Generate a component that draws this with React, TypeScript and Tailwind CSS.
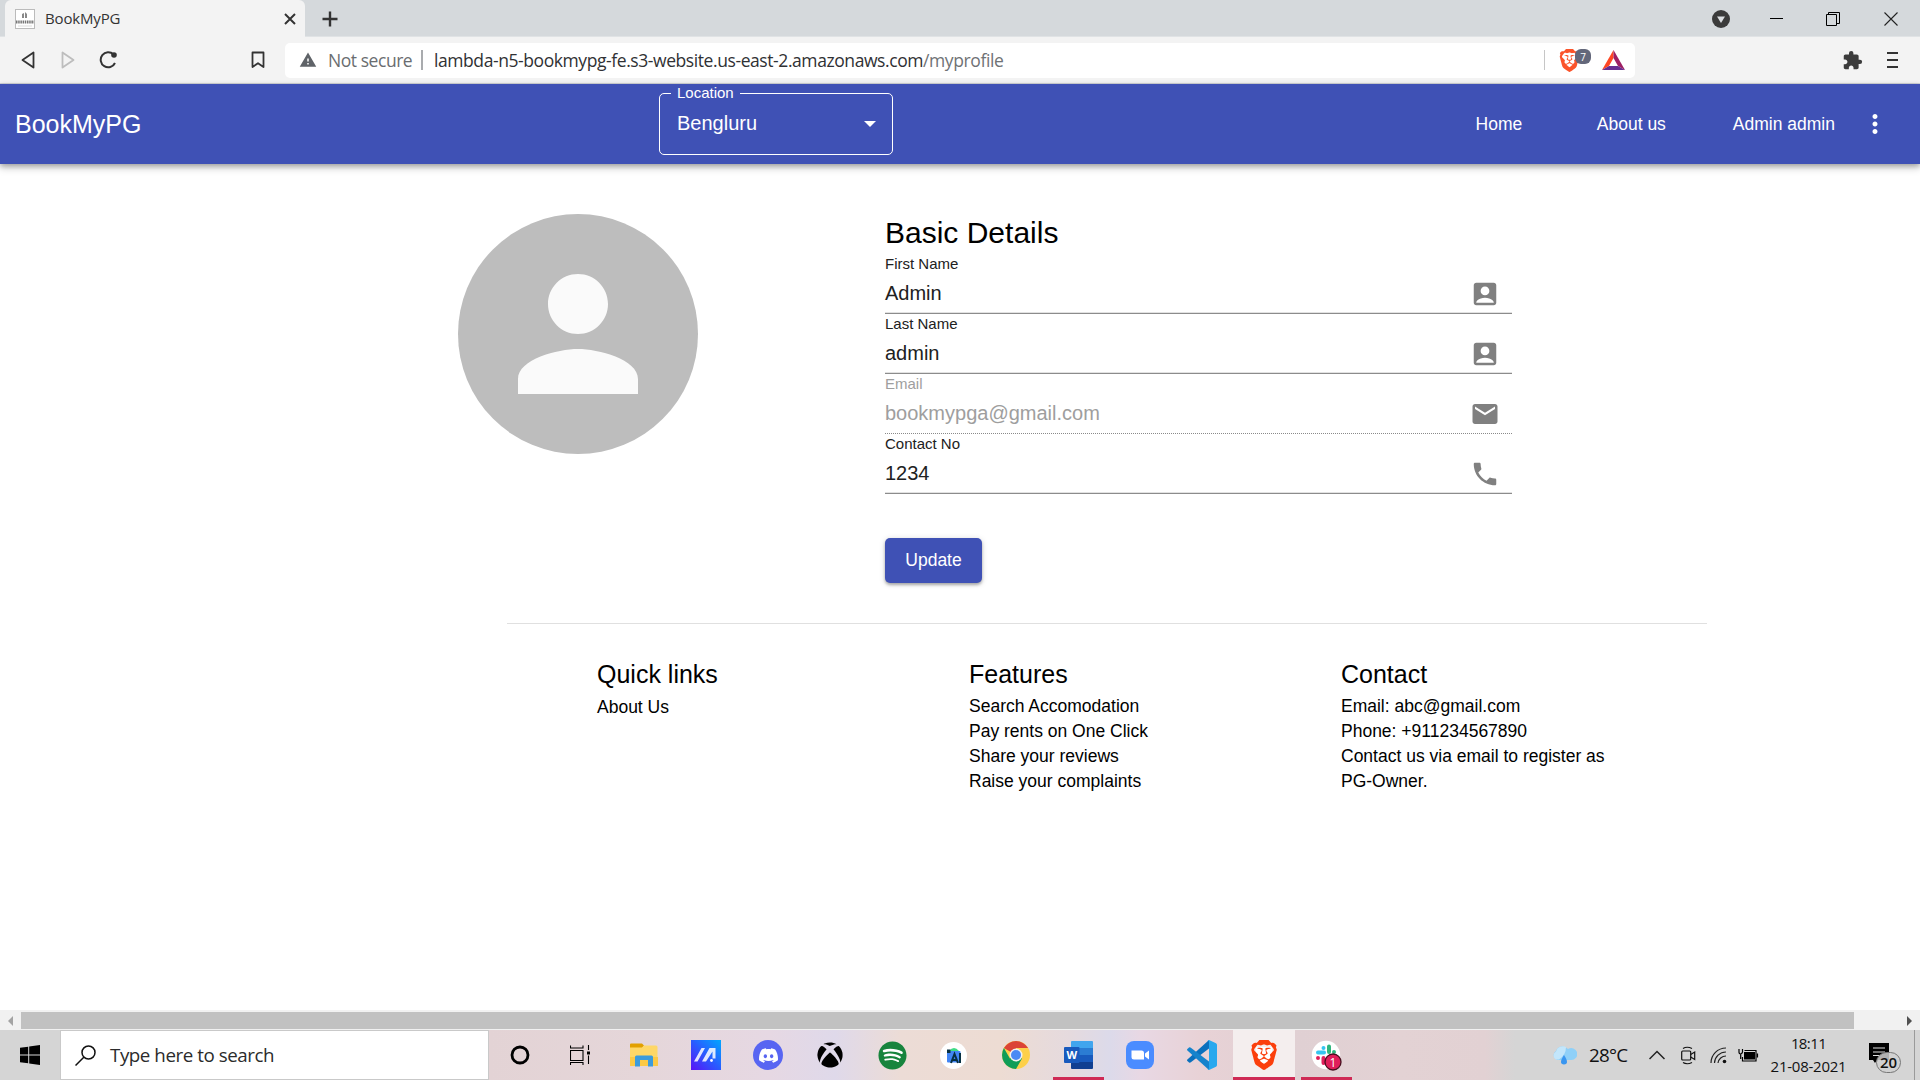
import React from "react";
import { MdAccountBox, MdEmail, MdPhone, MdPerson, MdMoreVert, MdExtension, MdWarning } from "react-icons/md";
import { SiBrave, SiDiscord } from "react-icons/si";
import { FaXbox, FaSpotify } from "react-icons/fa";

function TabStrip() {
  return (
    <div className="flex h-[37px] border-b border-[#e0e3e5] bg-[#d5d9dc] pl-[5px]">
      <div className="flex h-[37px] w-[300px] items-center rounded-t-[6px] bg-[#f3f3f3] pl-[10px] pr-[9px]">
        <svg width="20" height="20" viewBox="0 0 20 20">
          <rect x="0.5" y="0.5" width="19" height="19" fill="#fff" stroke="#bbb" />
          <path d="M7 9V5l2-1v5zM10 9V3l2 2v4z" fill="#888" />
          <path d="M1 13h18" stroke="#777" strokeWidth="3" strokeDasharray="1.5 .7" />
          <path d="M3 17h14" stroke="#ddd" />
        </svg>
        <span className="mb-[2px] ml-[10px] grow font-['Open_Sans'] text-[15px] leading-5 tracking-[-0.15px] text-[#333]">BookMyPG</span>
        <svg width="12" height="12" viewBox="0 0 12 12" stroke="#333" strokeWidth="2"><path d="M1 1l10 10M11 1L1 11" /></svg>
      </div>
      <svg className="ml-[17px] mt-[11px]" width="16" height="16" viewBox="0 0 16 16" stroke="#333" strokeWidth="2.4"><path d="M8 0.5v15M0.5 8h15" /></svg>
      <div className="ml-auto flex h-[37px] items-center">
        <svg width="18" height="18" viewBox="0 0 18 18"><circle cx="9" cy="9" r="9" fill="#3b3b3b" /><path d="M5 6.5h8L9 13z" fill="#dcdfe2" /></svg>
        <svg className="ml-10" width="13" height="13" viewBox="0 0 13 13"><path d="M0 6.5h13" stroke="#000" /></svg>
        <svg className="ml-[43px]" width="14" height="14" viewBox="0 0 14 14" fill="none" stroke="#000"><path d="M.5 2.500h10v11h-10zM2.500 2.500v-2h11v11h-3" /></svg>
        <svg className="ml-[44px] mr-[22px]" width="14" height="14" viewBox="0 0 14 14" stroke="#222" strokeWidth="1.100"><path d="M.5 .5l13 13M13.500 .5l-13 13" /></svg>
      </div>
    </div>
  );
}

function Toolbar() {
  return (
    <div className="flex h-[47px] items-center border-b border-[#d2d4d9] bg-[#f3f3f3]">
      <svg className="ml-[21px]" width="14" height="18" viewBox="0 0 14 18" fill="none" stroke="#333" strokeWidth="1.800" strokeLinejoin="round"><path d="M12.500 1.500v15L1.500 9z" /></svg>
      <svg className="ml-[26px]" width="14" height="18" viewBox="0 0 14 18" fill="none" stroke="#bdbdbd" strokeWidth="1.800" strokeLinejoin="round"><path d="M1.500 1.500v15l11-7.500z" /></svg>
      <svg className="ml-6" width="20" height="18" viewBox="0 0 20 18" fill="none" stroke="#333" strokeWidth="2"><path d="M14.500 3.500A7.500 7.500 0 1 0 16 12" /><circle cx="15" cy="4" r="2.800" fill="#333" stroke="none" /></svg>
      <svg className="ml-[132px]" width="14" height="18" viewBox="0 0 14 18" fill="none" stroke="#333" strokeWidth="1.800" strokeLinejoin="round"><path d="M1.500 1.500h11v14.500L7 12.200 1.500 16z" /></svg>
      <div className="ml-5 flex h-[35px] w-[1350px] items-center rounded-[5px] bg-white font-['Open_Sans'] text-[17.5px] leading-6">
        <MdWarning className="ml-[14px] shrink-0 text-[#5f6368]" size={18} />
        <span className="ml-[11px] w-[93px] whitespace-nowrap tracking-[-0.45px] text-[#6a6d70]">Not secure</span>
        <span className="h-5 w-[2px] bg-[#a9abae]" />
        <span className="ml-[11px] whitespace-nowrap tracking-[-0.42px] text-[#303134]">lambda-n5-bookmypg-fe.s3-website.us-east-2.amazonaws.com</span>
        <span className="tracking-[-0.4px] text-[#6f7275]">/myprofile</span>
        <span className="ml-auto h-5 w-px bg-[#c6c6c6]" />
        <span className="relative ml-[15px] h-6 w-[30px]">
          <svg className="absolute left-0 top-[2px]" width="20" height="23" viewBox="0 0 20 23"><path d="M4 4h12v11l-6 6-6-6z" fill="#fff" /></svg>
          <SiBrave className="absolute left-[-2px] top-px text-[#fb542b]" size={23} />
          <span className="absolute left-[15px] top-px flex h-[15px] w-4 items-center justify-center rounded-[6px] bg-[#63677a] text-[10px] leading-none text-white">7</span>
        </span>
        <svg className="ml-[12px] mr-[10px]" width="23" height="20" viewBox="0 0 23 20"><path d="M11.500 0L0 20l7-4 4.500-8z" fill="#ff4724" /><path d="M11.500 0L23 20l-7-4-4.500-8z" fill="#9e1f63" /><path d="M0 20h23l-7-4H7z" fill="#662d91" /></svg>
      </div>
      <MdExtension className="ml-auto text-[#3b3b3b]" size={21} />
      <svg className="ml-6 mr-[21px]" width="12" height="16" viewBox="0 0 12 16" stroke="#333" strokeWidth="1.800"><path d="M0 1h11M0 8h11M0 15h11" /></svg>
    </div>
  );
}

function AppBar() {
  return (
    <header className="relative flex h-20 items-center bg-[#3f51b5] pl-[14px] text-white shadow-[0_2px_5px_rgba(0,0,0,0.25),0_4px_8px_rgba(0,0,0,0.18)]">
      <span className="w-[645px] pl-px text-[25px] leading-[30px]">BookMyPG</span>
      <fieldset className="mt-[-7px] h-[69px] w-[234px] rounded-[5px] border border-white pl-[11px] pr-4">
        <legend className="h-[15px] px-[6px] text-[15px] leading-[13px]">Location</legend>
        <div className="flex h-11 items-center justify-between pl-[6px]">
          <span className="text-[20px] leading-6">Bengluru</span>
          <svg className="mt-px" width="12" height="6" viewBox="0 0 12 6"><path d="M0 0h12L6 6z" fill="#fff" /></svg>
        </div>
      </fieldset>
      <nav className="ml-auto flex items-center text-[17.5px] leading-6">
        <span>Home</span>
        <span className="ml-[74.5px]">About us</span>
        <span className="ml-[67px]">Admin admin</span>
        <MdMoreVert className="ml-[25px] mr-[30px]" size={30} />
      </nav>
    </header>
  );
}

function Field({ label, value, icon, disabled = false }: { label: string; value: string; icon: React.ReactNode; disabled?: boolean }) {
  return (
    <div className={disabled ? "text-[#9e9e9e]" : "text-[#212121]"}>
      <div className="text-[15px] leading-5">{label}</div>
      <div className="flex h-[38px] items-center justify-between pr-3 text-[20px] leading-6">
        {value}
        <span className="mt-[2px] text-[#808080]">{icon}</span>
      </div>
      {disabled ? (
        <div className="h-[2px] border-b border-dotted border-[#8a8a8a]" />
      ) : (
        <div className="h-[2px] border-b border-[#8c8c8c] bg-[#e2e2e2]" />
      )}
    </div>
  );
}

function FooterColumn({ title, lines, first = false }: { title: string; lines: string[]; first?: boolean }) {
  return (
    <div className="w-[372px] shrink-0">
      <h3 className="text-[25px] leading-[30px]">{title}</h3>
      <ul className={first ? "mt-1.5 text-[17.5px] leading-[25px]" : "mt-[5px] text-[17.5px] leading-[25px]"}>
        {lines.map((l) => (<li key={l} className="w-[280px]">{l}</li>))}
      </ul>
    </div>
  );
}

function Profile() {
  return (
    <main className="h-[846px] text-black">
      <div className="flex pl-[458px] pt-[50px]">
        <div className="flex h-60 w-60 items-center justify-center rounded-full bg-[#bdbdbd] text-[#fafafa]"><MdPerson size={180} /></div>
        <section className="ml-[187px] mt-px w-[627px]">
          <h2 className="mb-1 text-[30px] leading-[35px]">Basic Details</h2>
          <Field label="First Name" value="Admin" icon={<MdAccountBox size={30} />} />
          <Field label="Last Name" value="admin" icon={<MdAccountBox size={30} />} />
          <Field label="Email" value="bookmypga@gmail.com" icon={<MdEmail size={30} />} disabled />
          <Field label="Contact No" value="1234" icon={<MdPhone size={30} />} />
          <button className="mt-11 flex h-[45px] w-[97px] items-center justify-center rounded-[5px] bg-[#3f51b5] pb-[2px] text-[17.5px] leading-6 text-white shadow-[0_2px_3px_rgba(0,0,0,0.28),0_1px_6px_rgba(0,0,0,0.15)]">Update</button>
        </section>
      </div>
      <footer className="ml-[507px] mt-10 w-[1200px] border-t border-[#e0e0e0] pl-[90px] pt-[35px]">
        <div className="flex">
          <FooterColumn title="Quick links" lines={["About Us"]} first />
          <FooterColumn title="Features" lines={["Search Accomodation", "Pay rents on One Click", "Share your reviews", "Raise your complaints"]} />
          <FooterColumn title="Contact" lines={["Email: abc@gmail.com", "Phone: +911234567890", "Contact us via email to register as PG-Owner."]} />
        </div>
      </footer>
    </main>
  );
}

function ScrollBar() {
  return (
    <div className="flex h-5 items-center bg-[#f1f1f1] pb-px pt-[2px]">
      <svg className="ml-2 mr-2" width="5" height="10" viewBox="0 0 5 10"><path d="M5 0v10L0 5z" fill="#a3a3a3" /></svg>
      <div className="h-[17px] w-[1833px] bg-[#c1c1c1]" />
      <svg className="ml-auto mr-2" width="5" height="10" viewBox="0 0 5 10"><path d="M0 0v10l5-5z" fill="#505050" /></svg>
    </div>
  );
}

const apps: { name: string; cell: string; bar: string; icon: React.ReactNode }[] = [
  { name: "cortana", cell: "", bar: "", icon: <svg width="20" height="20" viewBox="0 0 20 20"><circle cx="10" cy="10" r="8" fill="none" stroke="#000" strokeWidth="2.800" /></svg> },
  { name: "taskview", cell: "", bar: "", icon: <svg className="-ml-1" width="20" height="20" viewBox="0 0 20 20" fill="none" stroke="#000" strokeWidth="1.100"><path d="M.5 5.500h12.500v10H.5zM.5 .5v2.500H13V.5M.5 20v-2.500H13V20M18.500 0v5M18.500 10.500V19" /><path d="M17 6.500h3v3h-3z" fill="#000" stroke="none" /></svg> },
  { name: "explorer", cell: "", bar: "", icon: <svg className="-mt-px" width="28" height="24" viewBox="0 0 28 24"><path d="M0 1.500Q0 .5 1 .5h11l2 2-2 3H0z" fill="#e2a000" /><path d="M0 4.500h12l2-2h12q1.500 0 1.500 1.500v19H0z" fill="#fed767" /><path d="M0 14h28v9H0z" fill="#fcc945" /><path d="M5 23.500V14q0-1.500 1.500-1.500h15q1.500 0 1.500 1.500v9.500h-5V17h-8v6.500z" fill="#3c9bdc" /></svg> },
  { name: "myasus", cell: "", bar: "", icon: <svg width="30" height="30" viewBox="0 0 30 30"><defs><linearGradient id="ma" x1="0" y1="1" x2="1" y2="0"><stop offset="0" stopColor="#5a12f5" /><stop offset=".5" stopColor="#2a5bff" /><stop offset="1" stopColor="#00a8ff" /></linearGradient></defs><path d="M0 0h30v30H0z" fill="url(#ma)" /><path d="M3 21.500L10.500 8h3.500L6.500 21.500zM11 21.500L18.500 8h6v10.500h-3V11.500L15 21.500z" fill="#fff" opacity=".85" /><circle cx="20.500" cy="20.500" r="1.400" fill="#fff" /></svg> },
  { name: "discord", cell: "", bar: "", icon: <span className="flex h-[30px] w-[30px] items-center justify-center rounded-full bg-[#5865f2] text-white"><SiDiscord size={19} /></span> },
  { name: "xbox", cell: "", bar: "", icon: <FaXbox size={26} color="#000" /> },
  { name: "spotify", cell: "", bar: "", icon: <span className="flex rounded-full bg-[radial-gradient(white_60%,transparent_62%)]"><FaSpotify size={29} color="#17843d" /></span> },
  { name: "studio", cell: "", bar: "", icon: <svg className="-ml-px" width="27" height="27" viewBox="0 0 27 27"><circle cx="13.500" cy="13.500" r="13.500" fill="#fff" /><path d="M9 9q5-6 10 0z" fill="#3ddc84" /><rect x="7" y="9" width="13.500" height="11.500" rx="1" fill="#4285f4" /><path d="M7 7.500h3.500v3.500H7z" fill="#073042" /><path d="M11 21l3.500-9 3.500 9M12.300 18h4.400M20 11v10" fill="none" stroke="#073042" strokeWidth="2" /></svg> },
  { name: "chrome", cell: "", bar: "", icon: <svg className="-ml-px" width="28" height="28" viewBox="0 0 28 28"><circle cx="14" cy="14" r="14" fill="#fdd04a" /><path d="M14 14L1.900 7A14 14 0 0 1 26.100 7H14z" fill="#db4437" /><path d="M14 14l-6.100 3.500L1.900 7A14 14 0 0 0 14 28l6-10.500z" fill="#0f9d58" /><circle cx="14" cy="14" r="6.500" fill="#f1f1f1" /><circle cx="14" cy="14" r="5" fill="#4a8af4" /></svg> },
  { name: "word", cell: "", bar: "w-[51px] bg-[#cf2a55]", icon: <svg width="29" height="28" viewBox="0 0 29 28"><path d="M7 1q0-1 1-1h20q1 0 1 1v6H7z" fill="#41a5ee" /><path d="M7 7h22v7H7z" fill="#2b7cd3" /><path d="M7 14h22v7H7z" fill="#185abd" /><path d="M7 21h22v6q0 1-1 1H8q-1 0-1-1z" fill="#103f91" /><rect y="6" width="15.500" height="16" rx="1" fill="#185abd" /><text x="7.800" y="18" textAnchor="middle" fill="#fff" fontFamily="Open Sans" fontWeight="700" fontSize="11">W</text></svg> },
  { name: "zoom", cell: "", bar: "", icon: <svg width="28" height="28" viewBox="0 0 28 28"><rect width="28" height="28" rx="8" fill="#4a8cff" /><path d="M5.500 9.500h10q2.500 0 2.500 2.500v6.500H8q-2.500 0-2.500-2.500zM19 12.500l4-3v9l-4-3z" fill="#fff" /></svg> },
  { name: "vscode", cell: "", bar: "", icon: <svg width="30" height="30" viewBox="0 0 30 30"><path d="M22 0v8.500L3.500 22.500l-1.200.2L.4 21q-.8-.8 0-1.600z" fill="#0a70bd" /><path d="M22 30v-8.500L3.500 7.500l-1.200-.2L.4 9q-.8.8 0 1.600z" fill="#1583cc" /><path d="M22 0l7 3.300q1 .5 1 1.700v20q0 1.200-1 1.700L22 30q-1 0-1.500-.8 1.500.3 1.500-1.200V2q0-1.500-1.500-1.200Q21 0 22 0z" fill="#28a8ee" /></svg> },
  { name: "brave", cell: "bg-[#f4eeee]", bar: "w-[62px] bg-[#cf2a55]", icon: <span className="relative flex"><svg className="absolute left-1 top-1" width="22" height="22" viewBox="0 0 22 22"><path d="M3 3h16v11l-8 7-8-7z" fill="#fff" /></svg><SiBrave className="relative" size={30} color="#fb3f0c" /></span> },
  { name: "slack", cell: "", bar: "w-[51px] bg-[#cf2a55]", icon: <svg className="ml-1" width="34" height="34" viewBox="0 0 34 34"><circle cx="15" cy="17" r="14.200" fill="#fff" /><g strokeWidth="4" strokeLinecap="round"><path d="M12.500 10v.01M7 14.500h6" stroke="#36c5f0" /><path d="M18 8.500v5.500M23 14v.01" stroke="#2eb67d" /><path d="M7 20v.01M12.500 20v5" stroke="#e01e5a" /><path d="M18 20h5" stroke="#ecb22e" /></g><circle cx="22" cy="24" r="8" fill="#e01e5a" stroke="#47101f" strokeWidth="1.300" /><text x="22" y="28.500" textAnchor="middle" fill="#fff" fontFamily="Open Sans" fontSize="12">1</text></svg> },
];

function Taskbar() {
  return (
    <div className="flex h-[50px] bg-[linear-gradient(90deg,#d5d5d5_0px,#d5d5d5_60px,#e3d3d5_490px,#e5d6d9_640px,#e6d8e3_770px,#dfd9ea_835px,#ecdcd6_900px,#eddcd3_1000px,#e5dade_1070px,#dcdaea_1110px,#e8d8e4_1140px,#e8d2d6_1200px,#e0d0d3_1300px,#e3d2d4_1400px,#e2d1d3_1485px,#d5d5d5_1515px)]">
      <div className="flex w-[60px] items-center justify-center">
        <svg width="20" height="20" viewBox="0 0 20 20"><path d="M0 2.800l8.200-1.100v7.800H0zM9.200 1.500L20 0v9.500H9.200zM0 10.500h8.200v7.800L0 17.200zM9.200 10.500H20V20L9.200 18.500z" fill="#000" /></svg>
      </div>
      <div className="flex h-[50px] w-[429px] items-center border border-[#c9c9c9] bg-white pl-[14px]">
        <svg width="21" height="21" viewBox="0 0 21 21" fill="none" stroke="#111" strokeWidth="1.500"><circle cx="13.500" cy="7.500" r="6.500" /><path d="M8.800 12.200L.5 20.500" /></svg>
        <span className="ml-[14px] font-['Open_Sans'] text-[18.75px] leading-6 tracking-[-0.45px] text-[#2b2b2b]">Type here to search</span>
      </div>
      {apps.map((a) => (
        <div key={a.name} className={"relative flex w-[62px] items-center justify-center " + a.cell}>
          {a.icon}
          <span className={"absolute bottom-0 h-[3px] " + a.bar} />
        </div>
      ))}
      <div className="ml-auto flex items-center font-['Open_Sans'] text-[#111]">
        <svg width="26" height="20" viewBox="0 0 26 20"><path d="M6 15A5 5 0 0 1 5 6 7 7 0 0 1 17 4a6 6 0 1 1 3 11z" fill="#8fd0f8" /><path d="M5 14.500A4.500 4.500 0 0 1 5 6.500a7 7 0 0 1 10-4.500q0 8-7 12.500z" fill="#c3e6fb" /><path d="M13 10q6 9 0 9.500Q7 19 13 10z" fill="#3a96f0" /></svg>
        <span className="ml-3 w-[60px] text-[18.75px] leading-6 tracking-[-0.7px]">28°C</span>
        <svg width="16" height="10" viewBox="0 0 16 10" fill="none" stroke="#222" strokeWidth="1.500"><path d="M.5 9L8 1.500 15.500 9" /></svg>
        <svg className="ml-4" width="15" height="19" viewBox="0 0 15 19" fill="none" stroke="#111" strokeWidth="1.200"><rect x=".7" y="5" width="9" height="9" rx="1" /><path d="M9.700 8.500l4-2.500v7.500l-4-2.500M2 2.500q4-2.500 9 0M2 16.500q4 2.500 9 0" /></svg>
        <svg className="ml-[14px]" width="17" height="17" viewBox="0 0 17 17" fill="none" stroke="#222" strokeWidth="1.200"><path d="M1 16A15 15 0 0 1 16 1M4.500 16A11.500 11.500 0 0 1 16 5M8 16a8 8 0 0 1 8-7" /><circle cx="14.500" cy="14.500" r="1.800" fill="#111" stroke="none" /></svg>
        <svg className="ml-[11px]" width="21" height="15" viewBox="0 0 21 15"><path d="M6 4h11v7.500H6z" fill="#000" /><path d="M6.500 2.500h11.500v10.500H4.500V9M19.500 5.500v4M1 1v3q0 2 1.500 2T4.500 4V1M2.700 6v5" fill="none" stroke="#000" strokeWidth="1.200" /></svg>
        <div className="ml-[11px] w-[77px] whitespace-nowrap text-center text-[15px] leading-[23px]">
          <div className="tracking-[-0.6px]">18:11</div>
          <div className="tracking-[-0.25px]">21-08-2021</div>
        </div>
        <div className="relative ml-[22px] mt-[6px] h-[30px] w-[34px]">
          <svg className="absolute left-0 top-0" width="20" height="20" viewBox="0 0 20 20"><path d="M0 0h20v17H8l-2 3-2-3H0z" fill="#000" /><path d="M4 5h12M4 9h12M4 12.500h7" stroke="#ddd" strokeWidth="1.200" /></svg>
          <span className="absolute left-[7px] top-[9px] flex h-[21px] w-[25px] items-center justify-center rounded-full border border-[#777] bg-[#d0d0d0]/85 text-[15px] font-semibold leading-none">20</span>
        </div>
        <span className="ml-[11px] mr-[5px] h-[50px] w-px bg-[#9a9a9a]" />
      </div>
    </div>
  );
}

export default function App() {
  return (
    <div className="flex h-[1080px] w-[1920px] flex-col overflow-hidden bg-white font-['Liberation_Sans',Arial,sans-serif]">
      <TabStrip />
      <Toolbar />
      <AppBar />
      <Profile />
      <ScrollBar />
      <Taskbar />
    </div>
  );
}
